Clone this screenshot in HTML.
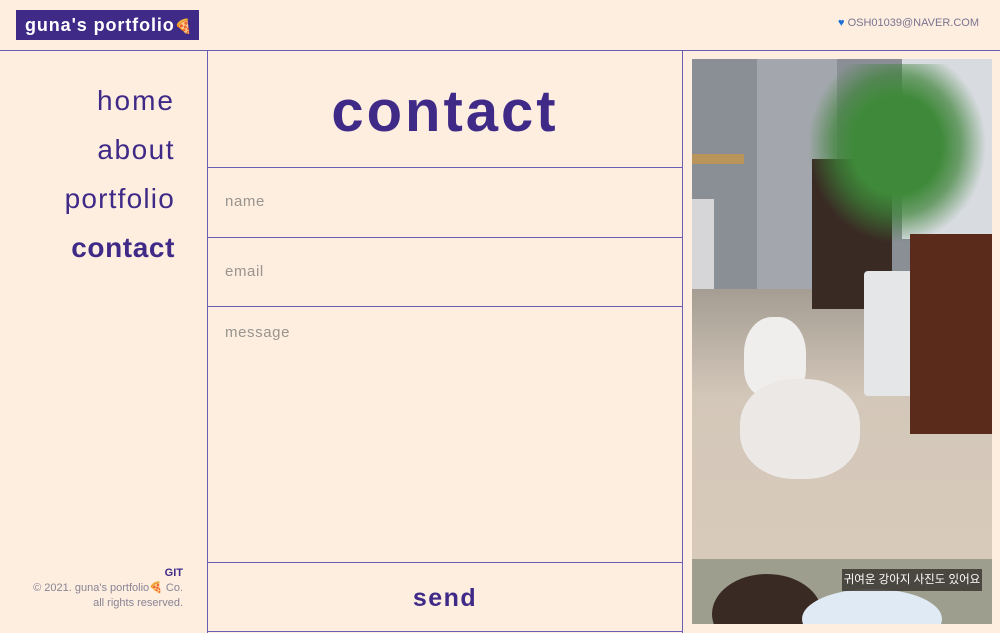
<!DOCTYPE html>
<html><head><meta charset="utf-8"><style>
*{margin:0;padding:0;box-sizing:border-box}
body{width:1000px;height:633px;background:#fdeee0;font-family:"Liberation Sans","Noto Sans CJK KR",sans-serif;position:relative;overflow:hidden}
.abs{position:absolute}
.logo{left:16px;top:10px;width:183px;height:30px;background:#3f2a87;color:#fff;font-weight:bold;font-size:18px;line-height:30px;padding-left:9px;letter-spacing:0.9px;white-space:nowrap}
.hl{background:#6b5db3}
.nav{right:825px;text-align:right;color:#3f2a87;font-size:28px;letter-spacing:1.2px}
.ph{color:#9a948e;font-size:15px;left:225px;letter-spacing:0.6px}
</style></head><body>
<div class="abs logo">guna's portfolio<span style="font-size:14px">🍕</span></div>
<div class="abs" style="left:838px;top:17px;font-size:11px;color:#7a7490;letter-spacing:0;white-space:nowrap"><span style="color:#1a6fd6">♥</span> OSH01039@NAVER.COM</div>
<div class="abs hl" style="left:0;top:50px;width:1000px;height:1px"></div>
<div class="abs hl" style="left:207px;top:50px;width:1px;height:583px"></div>
<div class="abs hl" style="left:682px;top:50px;width:1px;height:583px"></div>
<div class="abs hl" style="left:207px;top:167px;width:476px;height:1px"></div>
<div class="abs hl" style="left:207px;top:237px;width:476px;height:1px"></div>
<div class="abs hl" style="left:207px;top:306px;width:476px;height:1px"></div>
<div class="abs hl" style="left:207px;top:562px;width:476px;height:1px"></div>
<div class="abs hl" style="left:207px;top:631px;width:476px;height:1px"></div>
<div class="abs nav" style="top:85px;font-weight:300;letter-spacing:2px">home</div>
<div class="abs nav" style="top:134px;letter-spacing:1.5px">about</div>
<div class="abs nav" style="top:183px">portfolio</div>
<div class="abs nav" style="top:232px;font-weight:bold;letter-spacing:0.6px">contact</div>
<div class="abs" style="left:208px;width:474px;top:78px;text-align:center;font-size:58px;font-weight:bold;color:#3f2a87;letter-spacing:3px">contact</div>
<div class="abs ph" style="top:193px">name</div>
<div class="abs ph" style="top:263px">email</div>
<div class="abs ph" style="top:324px">message</div>
<div class="abs" style="left:208px;width:474px;top:584px;text-align:center;font-size:25px;font-weight:bold;color:#3f2a87;letter-spacing:1.5px">send</div>
<div class="abs" style="right:817px;top:566px;font-size:11px;text-align:right;color:#8a8494;line-height:15px"><b style="color:#3f2a87">GIT</b><br>© 2021. guna's portfolio🍕 Co.<br>all rights reserved.</div>
<div class="abs" style="left:692px;top:59px;width:300px;height:500px;overflow:hidden;background:#b9b2a9">
 <div class="abs" style="left:0;top:0;width:300px;height:235px;background:#8a8f96"></div>
 <div class="abs" style="left:65px;top:0;width:80px;height:235px;background:#a3a7ad"></div>
 <div class="abs" style="left:210px;top:0;width:90px;height:180px;background:#d8dbe0"></div>
 <div class="abs" style="left:0;top:95px;width:52px;height:10px;background:#b9955b"></div>
 <div class="abs" style="left:0;top:140px;width:22px;height:130px;background:#d6d6d8"></div>
 <div class="abs" style="left:0;top:230px;width:300px;height:270px;background:linear-gradient(#a59d93,#d3c7b9 40%,#d8cabb)"></div>
 <div class="abs" style="left:120px;top:100px;width:80px;height:150px;background:#3a2a24"></div>
 <div class="abs" style="left:115px;top:5px;width:180px;height:180px;background:radial-gradient(ellipse at 50% 45%,#3f8a3a 0 35%,rgba(60,130,55,.7) 50%,transparent 70%)"></div>
 <div class="abs" style="left:172px;top:212px;width:50px;height:125px;background:#e4e6e8;border-radius:4px"></div>
 <div class="abs" style="left:218px;top:175px;width:82px;height:200px;background:#5a2a1a"></div>
 <div class="abs" style="left:52px;top:258px;width:62px;height:80px;background:#f0eeec;border-radius:45% 45% 35% 35%"></div>
 <div class="abs" style="left:48px;top:320px;width:120px;height:100px;background:#ebe8e6;border-radius:45%"></div>
</div>
<div class="abs" style="left:692px;top:559px;width:300px;height:65px;background:#9d9e8e;overflow:hidden">
 <div class="abs" style="left:20px;top:15px;width:110px;height:80px;background:#3a2a24;border-radius:50%"></div>
 <div class="abs" style="left:110px;top:30px;width:140px;height:60px;background:#e0eaf4;border-radius:50%"></div>
 <div class="abs" style="left:150px;top:10px;width:140px;height:22px;background:rgba(60,55,50,.85);color:#fff;font-size:11.5px;line-height:22px;text-align:center">귀여운 강아지 사진도 있어요</div>
</div>
</body></html>
